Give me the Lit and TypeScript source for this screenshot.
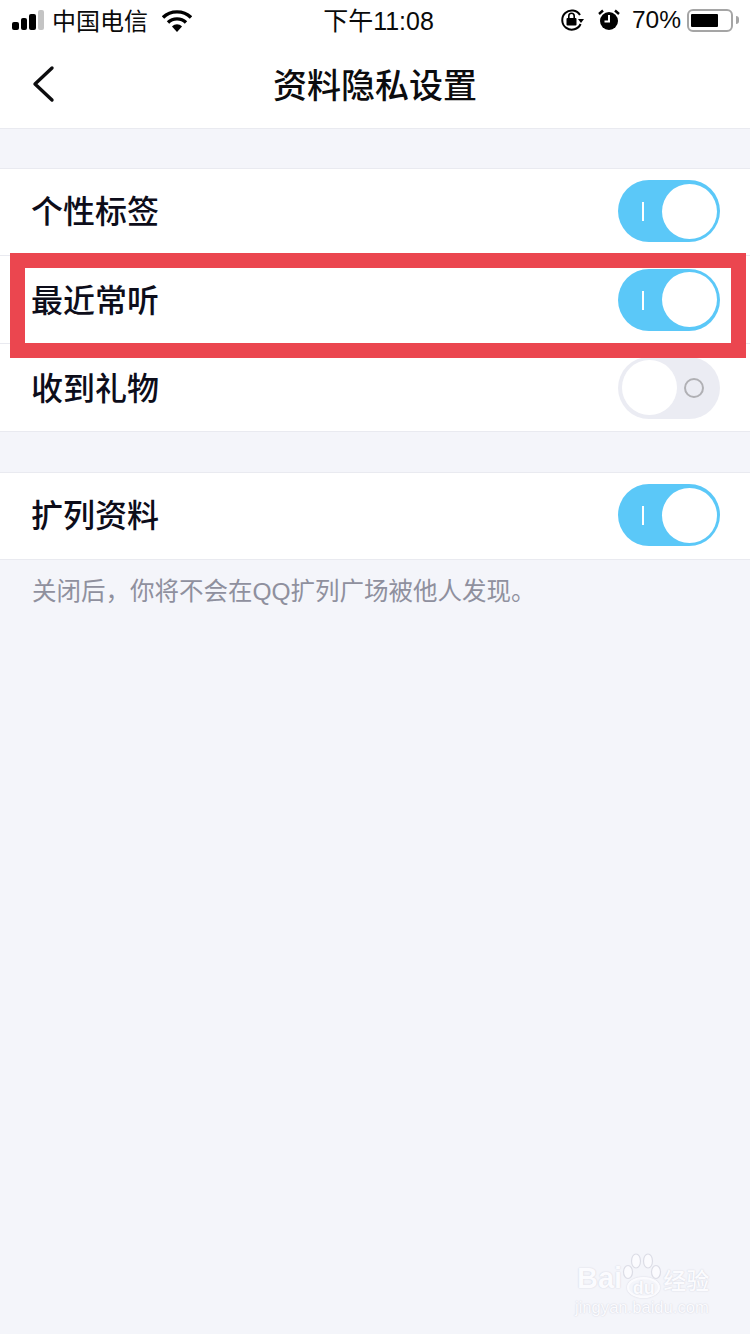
import { LitElement, css, html, svg } from 'lit'
import { customElement, property } from 'lit/decorators.js'

@customElement('privacy-toggle')
class PrivacyToggle extends LitElement {
  @property({ type: Boolean }) on = false

  static styles = css`
    :host {
      display: block;
      flex: none;
    }

    .track {
      position: relative;
      box-sizing: border-box;
      width: 102px;
      height: 62px;
      border-radius: 31px;
      background: #ebecf3;
    }

    .track.on {
      background: #5bc8f8;
    }

    .knob {
      position: absolute;
      top: 3.5px;
      left: 4px;
      width: 55px;
      height: 55px;
      border-radius: 50%;
      background: #fff;
    }

    .track.on .knob {
      left: 44px;
    }

    .bar {
      position: absolute;
      left: 24px;
      top: 22px;
      width: 2px;
      height: 19px;
      background: #fff;
    }

    .ring {
      position: absolute;
      left: 66px;
      top: 21px;
      box-sizing: border-box;
      width: 20px;
      height: 20px;
      border: 2px solid #b0b0b4;
      border-radius: 50%;
    }
  `

  render() {
    return html`
      <div class="track ${this.on ? 'on' : ''}">
        ${this.on ? html`<span class="bar"></span>` : html`<span class="ring"></span>`}
        <span class="knob"></span>
      </div>
    `
  }
}

@customElement('app-root')
class AppRoot extends LitElement {
  static styles = css`
    :host {
      display: block;
      font-family: 'Liberation Sans', 'Noto Sans CJK SC', sans-serif;
    }

    .page {
      position: relative;
      display: flex;
      flex-direction: column;
      height: 1334px;
      overflow: hidden;
      background: #f4f5fa;
    }

    .status {
      display: flex;
      align-items: center;
      height: 40px;
      padding: 0 12px;
      background: #fff;
      color: #0a0a0a;
      font-size: 24px;
      position: relative;
    }

    .carrier {
      margin-bottom: 2px;
    }

    .signal {
      display: flex;
      align-items: flex-end;
      gap: 2px;
      height: 20px;
      margin: 0 8px 1px 0;
    }

    .signal i {
      display: block;
      width: 6.5px;
      border-radius: 2px;
      background: #000;
    }

    .signal i.off {
      background: #c4c4c4;
    }

    .wifi {
      margin-left: 14px;
    }

    .time {
      position: absolute;
      left: 0;
      right: 0;
      top: 5px;
      text-align: center;
      font-size: 25px;
      line-height: 32px;
      padding-left: 7px;
      box-sizing: border-box;
    }

    .right {
      display: flex;
      align-items: center;
      margin-left: auto;
      margin-right: -1px;
    }

    .pct {
      margin: 0 6px 0 12px;
      font-size: 24.5px;
    }

    .battery {
      box-sizing: border-box;
      width: 46px;
      height: 23px;
      padding: 3px 2px;
      border: 2px solid #a5a5a5;
      border-radius: 6px;
      margin-right: 3px;
    }

    .battery b {
      display: block;
      width: 27px;
      height: 100%;
      background: #000;
      border-radius: 1px;
    }

    .nub {
      width: 3px;
      height: 8px;
      background: #a5a5a5;
      border-radius: 0 3px 3px 0;
    }

    .nav {
      position: relative;
      display: flex;
      align-items: center;
      justify-content: center;
      height: 89px;
      box-sizing: border-box;
      background: #fff;
      border-bottom: 1px solid #e9eaf0;
      color: #0c0c0e;
      font-size: 34px;
      font-weight: 500;
    }

    .nav span {
      margin-bottom: 2px;
    }

    .back {
      position: absolute;
      left: 31px;
      top: 24px;
    }

    .group {
      margin-top: 40px;
      background: #fff;
      border-top: 1px solid #e9eaf0;
    }

    .nav + .group {
      margin-top: 39px;
    }

    .row {
      display: flex;
      align-items: center;
      justify-content: space-between;
      box-sizing: border-box;
      height: 88px;
      padding: 0 30px 0 31px;
      border-bottom: 1px solid #e9eaf0;
      color: #0d0d1a;
      font-size: 32px;
      font-weight: 500;
    }

    .row:first-child {
      height: 87px;
      padding-bottom: 2px;
    }

    .row span {
      margin-bottom: 4px;
    }

    .note {
      padding: 16px 32px 0;
      color: #8f909e;
      font-size: 24.5px;
      line-height: 32px;
    }

    .mark {
      position: absolute;
      left: 10px;
      top: 253px;
      box-sizing: border-box;
      width: 736px;
      height: 105px;
      border: 15px solid #eb464f;
    }

    .watermark {
      position: absolute;
      left: 577px;
      top: 1252px;
      width: 140px;
      color: #fff;
      text-shadow: 0 0 1.5px #c9cad6;
    }

    .wm-top {
      display: flex;
      align-items: flex-end;
      font-size: 29px;
      font-weight: 700;
      line-height: 36px;
      height: 44px;
      color: #fbfbfe;
    }

    .wm-du {
      display: flex;
      align-items: center;
      justify-content: center;
      width: 33px;
      height: 21px;
      margin: 0 3px -2px 5px;
      border-radius: 50%;
      border: 2px solid #fbfbfe;
      box-shadow: 0 0 1.5px #c9cad6;
      font-size: 18px;
      line-height: 1;
      box-sizing: border-box;
    }

    .wm-cn {
      font-size: 23px;
      line-height: 30px;
      font-weight: 500;
    }

    .wm-url {
      margin-left: -2px;
      margin-top: 3px;
      font-size: 16.6px;
      line-height: 18px;
      color: #fbfbfe;
      white-space: nowrap;
    }

    .paw {
      position: absolute;
      left: 43px;
      top: 0;
    }
  `

  private row(label: string, on: boolean) {
    return html`
      <div class="row">
        <span>${label}</span>
        <privacy-toggle ?on=${on}></privacy-toggle>
      </div>
    `
  }

  private wifiIcon() {
    return svg`<path d="M1 9.5C8.5 2 21.5 2 29 9.5" fill="none" stroke="#000" stroke-width="3.4"/><path d="M6 14.5C11 9.6 19 9.6 24 14.5" fill="none" stroke="#000" stroke-width="3.4"/><path d="M10 18.6C13 15.6 17 15.6 20 18.6L15 24Z" fill="#000"/>`
  }

  render() {
    return html`
      <div class="page">
        <div class="status">
          <span class="signal">
            <i style="height:8px"></i>
            <i style="height:12px"></i>
            <i style="height:16px"></i>
            <i class="off" style="height:20px"></i>
          </span>
          <span class="carrier">中国电信</span>
          <svg class="wifi" width="30" height="24" viewBox="0 0 30 24">${this.wifiIcon()}</svg>
          <span class="time">下午11:08</span>
          <span class="right">
            <svg width="25" height="24" viewBox="0 0 25 24">
              <path d="M20 7A9.6 9.6 0 1 0 20.6 16" fill="none" stroke="#000" stroke-width="2"/>
              <path d="M18 11h6l-3 4z" fill="#000"/>
              <rect x="6.5" y="10" width="10" height="7.5" rx="1" fill="#000"/>
              <path d="M8.8 10V8a2.7 2.7 0 0 1 5.4 0v2" fill="none" stroke="#000" stroke-width="1.6"/>
            </svg>
            <svg style="margin-left:13px" width="22" height="24" viewBox="0 0 22 24">
              <circle cx="11" cy="13" r="9" fill="#000"/>
              <path d="M11 7v6.5H6.5" fill="none" stroke="#fff" stroke-width="2"/>
              <path d="M1 6l4-3.5M21 6l-4-3.5" stroke="#000" stroke-width="2.4"/>
            </svg>
            <span class="pct">70%</span>
            <span class="battery"><b></b></span>
            <span class="nub"></span>
          </span>
        </div>
        <div class="nav">
          <svg class="back" width="24" height="40" viewBox="0 0 24 40">
            <path d="M21 4 4 20l17 16" fill="none" stroke="#0c0c0e" stroke-width="3.4" stroke-linecap="round" stroke-linejoin="round"/>
          </svg>
          <span>资料隐私设置</span>
        </div>
        <div class="group">
          ${this.row('个性标签', true)}
          ${this.row('最近常听', true)}
          ${this.row('收到礼物', false)}
        </div>
        <div class="group">
          ${this.row('扩列资料', true)}
        </div>
        <div class="note">关闭后，你将不会在QQ扩列广场被他人发现。</div>
        <div class="mark"></div>
        <div class="watermark">
          <svg class="paw" width="44" height="34" viewBox="0 0 44 34">
            <g fill="#fbfbfe" stroke="#dcdde6" stroke-width="1.2">
              <ellipse cx="8" cy="20" rx="4.5" ry="6.5"/>
              <ellipse cx="16" cy="9" rx="4.5" ry="7"/>
              <ellipse cx="28" cy="9" rx="4.5" ry="7"/>
              <ellipse cx="36" cy="20" rx="4.5" ry="6.5"/>
            </g>
          </svg>
          <div class="wm-top">
            <span>Bai</span><span class="wm-du">du</span><span class="wm-cn">经验</span>
          </div>
          <div class="wm-url">jingyan.baidu.com</div>
        </div>
      </div>
    `
  }
}
